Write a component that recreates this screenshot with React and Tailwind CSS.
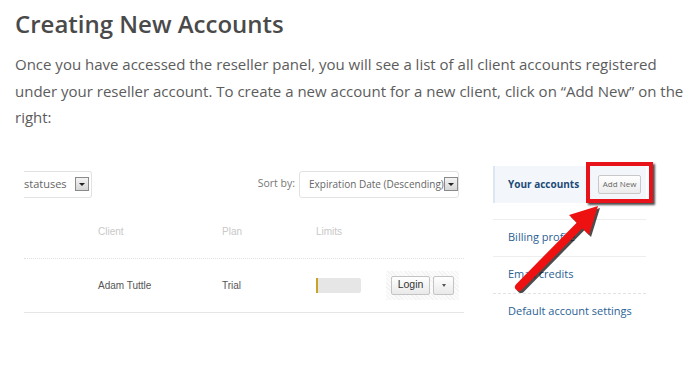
import React from "react";

const sideLinks = ["Billing profile", "Email credits", "Default account settings"];

const DropArrow = () => (
  <span className="flex h-[14px] w-[14px] shrink-0 items-center justify-center border border-[#8a8a8a] bg-gradient-to-b from-[#f4f4f4] to-[#d6d6d6]">
    <span className="h-0 w-0 border-x-[3px] border-t-[3px] border-x-transparent border-t-[#222]" />
  </span>
);

const App = () => {
  return (
    <div className="relative h-[365px] w-[694px] overflow-hidden bg-white font-['Open_Sans',sans-serif]">
      {/* article text */}
      <div className="pl-[15px] pt-[6px]">
        <h1 className="text-[24px] font-semibold leading-[36px] text-[#4a4a4a]">
          Creating New Accounts
        </h1>
        <p className="mt-[9px] w-[675px] text-[15px] leading-[26.5px] text-[#5c5c5c]">
          Once you have accessed the reseller panel, you will see a list of all client accounts registered
          under your reseller account. To create a new account for a new client, click on “Add New” on the
          right:
        </p>
      </div>

      {/* screenshot of the panel */}
      <div className="mt-[40px] flex pl-[24px]">
        <div className="w-[440px]">
          <div className="flex h-[27px] items-center justify-between">
            <div className="flex h-[27px] items-center gap-[8px] rounded-r-[3px] border-y border-r border-[#e2e2e2] pr-[2px] text-[11px] text-[#666]">
              <span>statuses</span>
              <DropArrow />
            </div>
            <div className="flex items-center gap-[4px] pr-[5px]">
              <span className="text-[10.5px] text-[#777]">Sort by:</span>
              <div className="flex h-[27px] w-[160px] items-center justify-between whitespace-nowrap rounded-[3px] border border-[#e2e2e2] pl-[9px] pr-[2px] text-[10px] text-[#666]">
                <span>Expiration Date (Descending)</span>
                <DropArrow />
              </div>
            </div>
          </div>

          <div className="flex h-[61px] items-center border-b border-dotted border-[#e0e0e0] pt-[8px] font-['Liberation_Sans',sans-serif] text-[10px] text-[#c8c8c8]">
            <span className="ml-[74px] w-[124px]">Client</span>
            <span className="w-[94px]">Plan</span>
            <span>Limits</span>
          </div>

          <div className="flex h-[54px] items-center border-b border-[#e6e6e6] font-['Liberation_Sans',sans-serif] text-[10px] text-[#555]">
            <span className="ml-[74px] w-[124px]">Adam Tuttle</span>
            <span className="w-[94px]">Trial</span>
            <span className="h-[15px] w-[45px] rounded-r-[2px] border-l-2 border-[#c9a227] bg-[#e6e6e6]" />
            <div className="ml-[25px] flex h-[29px] items-center gap-[3px] bg-[repeating-linear-gradient(45deg,#f3f3f3_0px,#f3f3f3_1px,#fbfbfb_1px,#fbfbfb_3px)] px-[5px]">
              <span className="flex h-[19px] w-[39px] items-center justify-center rounded-[2px] border border-[#c4c4c4] bg-gradient-to-b from-white to-[#e9e9e9] text-[10.5px] text-[#333]">
                Login
              </span>
              <span className="flex h-[19px] w-[21px] items-center justify-center rounded-[2px] border border-[#c4c4c4] bg-gradient-to-b from-white to-[#e9e9e9]">
                <span className="h-0 w-0 border-x-[2px] border-t-[3px] border-x-transparent border-t-[#555]" />
              </span>
            </div>
          </div>
        </div>

        {/* sidebar */}
        <div className="ml-[29px] -mt-[5px] w-[153px] text-[11px]">
          <div className="relative flex h-[37px] items-center border-l-2 border-[#dbe8f3] bg-[#f3f7fb] pl-[13px]">
            <span className="whitespace-nowrap text-[10px] font-bold text-[#1d4a78]">Your accounts</span>
            <span className="ml-[19px] flex h-[19px] w-[43px] items-center justify-center whitespace-nowrap rounded-[2px] border border-[#c8c8c8] bg-gradient-to-b from-white to-[#ececec] text-[8px] text-[#666]">
              Add New
            </span>
            <span className="absolute left-[91px] top-[-4px] h-[41px] w-[67px] border-[4px] border-[#e8121b] shadow-[2px_2px_2px_rgba(0,0,0,0.7)]" />
          </div>
          <div className="mt-[16px]">
            {sideLinks.map((label, i) => (
              <div
                key={label}
                className={`flex h-[37px] items-center border-t pl-[15px] text-[#2a5f95] ${
                  i === 2 ? "border-dashed border-[#e3e3e3]" : "border-[#eeeeee]"
                }`}
              >
                {label}
              </div>
            ))}
          </div>
        </div>
      </div>

      {/* red arrow pointing at Add New */}
      <svg className="absolute left-0 top-0" width="694" height="365" viewBox="0 0 694 365">
        <g transform="translate(2,2)" opacity="0.75">
          <line x1="519" y1="287" x2="580" y2="225" stroke="#111" strokeWidth="8" strokeLinecap="round" />
          <polygon points="598,206 569,215 589,235" fill="#111" />
        </g>
        <line x1="519" y1="287" x2="580" y2="225" stroke="#ee1111" strokeWidth="8" strokeLinecap="round" />
        <polygon points="598,206 569,215 589,235" fill="#ee1111" />
      </svg>
    </div>
  );
};

export default App;
